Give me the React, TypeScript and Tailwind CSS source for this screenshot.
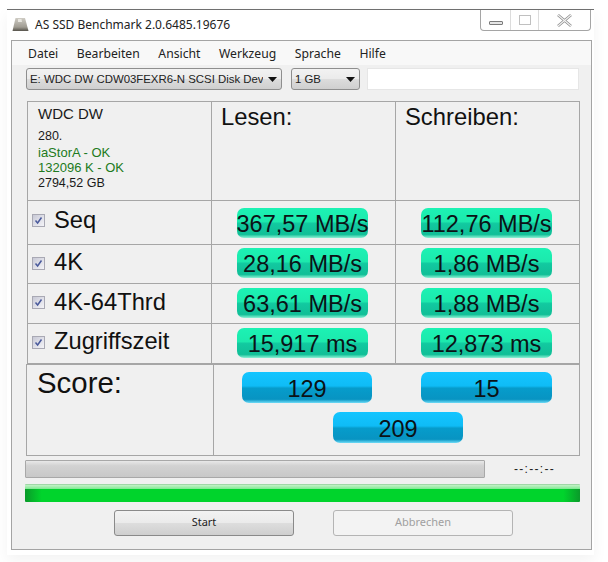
import React from "react";

function Badge({ children, blue = false, w = "w-[131px]" }: { children: React.ReactNode; blue?: boolean; w?: string }) {
  const skin = blue
    ? "h-[31px] pt-[5px] bg-[linear-gradient(#14c5ff_0%,#0fbcf6_45%,#069ccb_52%,#0894c2_88%,#6fdcf8_100%)]"
    : "h-[30px] pt-[4px] bg-[linear-gradient(#1cf2b4_0%,#1ce9ad_45%,#12c9a0_52%,#10bf97_88%,#8ff2d6_100%)]";
  return (
    <div className={`${w} ${skin} rounded-[7px] flex items-center justify-center whitespace-nowrap text-[23.5px] leading-none text-[#0b1216] font-['Liberation_Sans',sans-serif]`}>
      {children}
    </div>
  );
}

function Check() {
  return (
    <div className="w-[13px] h-[13px] shrink-0 border border-[#a9a9b4] bg-[linear-gradient(135deg,#c8c9d6,#f4f4f8)] flex items-center justify-center">
      <svg width="9" height="9" viewBox="0 0 9 9">
        <path d="M1.5 4.5 L3.6 7 L7.5 1.5" fill="none" stroke="#4a5a9c" strokeWidth="1.5" />
      </svg>
    </div>
  );
}

function Row({ label, a, b, h, labelPb, badgePb }: { label: string; a: string; b: string; h: string; labelPb: string; badgePb: string }) {
  return (
    <div className={`grid grid-cols-[184px_184px_185px] border-b border-[#a6a6a6] ${h}`}>
      <div className={`border-r border-[#a6a6a6] flex items-center gap-[9px] pl-[4px] ${labelPb} text-[23.7px] leading-none text-[#111] font-['Liberation_Sans',sans-serif]`}>
        <Check />
        <span>{label}</span>
      </div>
      <div className={`border-r border-[#a6a6a6] flex items-center pl-[25px] ${badgePb}`}>
        <Badge>{a}</Badge>
      </div>
      <div className={`flex items-center pl-[25px] ${badgePb}`}>
        <Badge>{b}</Badge>
      </div>
    </div>
  );
}

function Combo({ w, textW, text }: { w: string; textW: string; text: string }) {
  return (
    <div className={`${w} h-[22px] rounded-[3px] border border-[#8e8e8e] bg-[linear-gradient(#f2f2f2_0%,#ebebeb_48%,#dcdcdc_52%,#cfcfcf_100%)] flex items-center justify-between pl-[3px] pr-[4px]`}>
      <div className={`${textW} h-[16px] overflow-hidden`}>
        <div className="w-max text-[11.4px] leading-[16px] text-[#222] font-['Liberation_Sans',sans-serif]">{text}</div>
      </div>
      <svg width="9" height="5" viewBox="0 0 9 5" className="shrink-0">
        <path d="M0 0H9L4.5 5Z" fill="#111" />
      </svg>
    </div>
  );
}

function Btn({ children, disabled = false }: { children: React.ReactNode; disabled?: boolean }) {
  return (
    <div
      className={`w-[180px] h-[26px] pb-[1px] rounded-[3px] border flex items-center justify-center text-[11px] font-['Noto_Sans',sans-serif] ${
        disabled
          ? "border-[#b4b4b4] bg-[#f3f3f3] text-[#a0a0a0]"
          : "border-[#8a8a8a] bg-[linear-gradient(#f2f2f2_0%,#ebebeb_48%,#dddddd_52%,#cfcfcf_100%)] text-[#222]"
      }`}
    >
      {children}
    </div>
  );
}

export default function App() {
  return (
    <div className="w-[608px] h-[562px] bg-white pt-[9px] pl-[7px] overflow-hidden">
      <div className="w-[587px] h-[546px] border-t border-[#6f6f6f] shadow-[0_6px_14px_rgba(0,0,0,0.05)] flex flex-col">
        {/* title bar */}
        <div className="h-[30px] pl-[5px] pr-[3px] flex items-start justify-between bg-white">
          <div className="flex items-center gap-[6px] h-[29px]">
            <svg width="17" height="15" viewBox="0 0 17 15">
              <defs>
                <linearGradient id="drive" x1="0" y1="0" x2="0" y2="1">
                  <stop offset="0" stopColor="#cfccc4" />
                  <stop offset="0.7" stopColor="#a09c92" />
                  <stop offset="1" stopColor="#55524a" />
                </linearGradient>
              </defs>
              <path d="M3.5 1 H13 L16.5 14 H0.5 Z" fill="url(#drive)" />
              <path d="M6 2 H9.5 L10 5 H6 Z" fill="#e8e6e0" />
            </svg>
            <span className="text-[12px] text-[#222] font-['Noto_Sans',sans-serif]">AS SSD Benchmark 2.0.6485.19676</span>
          </div>
          <div className="w-[111px] h-[21px] border border-t-0 border-[#a5a5a5] rounded-b-[4px] flex">
            <div className="w-[30px] border-r border-[#dcdcdc] flex items-center justify-center">
              <div className="w-[14px] h-[4px] mt-[5px] border border-[#7a7a7a] rounded-[1px] bg-[#e5e5e5]" />
            </div>
            <div className="w-[28px] border-r border-[#dcdcdc] flex items-center justify-center">
              <div className="w-[12px] h-[10px] border border-[#c0c0c0]" />
            </div>
            <div className="flex-1 flex items-center justify-center">
              <svg width="15" height="13" viewBox="0 0 15 13">
                <path d="M1 1 L14 12 M14 1 L1 12" stroke="#8a8a8a" strokeWidth="2.6" />
                <path d="M1 1 L14 12 M14 1 L1 12" stroke="#f4f4f4" strokeWidth="1.1" />
              </svg>
            </div>
          </div>
        </div>

        {/* client */}
        <div className="ml-[4px] w-[581px] h-[510px] border border-[#a4a4a4] bg-[#f0f0f0] flex flex-col">
          <div className="h-[24px] pt-[2px] bg-[#f8f8f8] flex items-center gap-[18.6px] pl-[16px] text-[12.2px] text-[#222] font-['Noto_Sans',sans-serif]">
            <span>Datei</span>
            <span>Bearbeiten</span>
            <span>Ansicht</span>
            <span>Werkzeug</span>
            <span>Sprache</span>
            <span>Hilfe</span>
          </div>

          <div className="h-[36px] pl-[14px] pt-[3px] flex items-start">
            <Combo w="w-[256px]" textW="w-[233px]" text="E: WDC DW CDW03FEXR6-N SCSI Disk Dev" />
            <div className="ml-[9px]">
              <Combo w="w-[69px]" textW="w-[40px]" text="1 GB" />
            </div>
            <div className="ml-[7px] w-[212px] h-[22px] bg-white border border-[#e6e6e6]" />
          </div>

          <div className="ml-[15px] w-[553px] border border-b-0 border-[#a6a6a6]">
            <div className="grid grid-cols-[184px_184px_185px] h-[99px] border-b border-[#a6a6a6]">
              <div className="border-r border-[#a6a6a6] pl-[10px] pt-[3px] font-['Liberation_Sans',sans-serif]">
                <div className="text-[15px] leading-[18px] text-[#1a1a1a]">WDC DW</div>
                <div className="mt-[6px] text-[12.5px] leading-[15.5px] text-[#1a1a1a]">
                  <div>280.</div>
                  <div className="text-[13px] text-[#207a20]">iaStorA - OK</div>
                  <div className="text-[13px] text-[#207a20]">132096 K - OK</div>
                  <div>2794,52 GB</div>
                </div>
              </div>
              <div className="border-r border-[#a6a6a6] pl-[9px] pt-[1px] text-[23.8px] leading-[28px] text-[#111] font-['Liberation_Sans',sans-serif]">Lesen:</div>
              <div className="pl-[9px] pt-[1px] text-[23.8px] leading-[28px] text-[#111] font-['Liberation_Sans',sans-serif]">Schreiben:</div>
            </div>
            <Row h="h-[44px]" labelPb="pb-[4px]" badgePb="pb-0" label="Seq" a="367,57 MB/s" b="112,76 MB/s" />
            <Row h="h-[39px]" labelPb="pb-[2px]" badgePb="pb-[2px]" label="4K" a="28,16 MB/s" b="1,86 MB/s" />
            <Row h="h-[40px]" labelPb="pb-[2px]" badgePb="pb-[2px]" label="4K-64Thrd" a="63,61 MB/s" b="1,88 MB/s" />
            <Row h="h-[40px]" labelPb="pb-[3px]" badgePb="pb-[2px]" label="Zugriffszeit" a="15,917 ms" b="12,873 ms" />
          </div>

          <div className="ml-[14px] w-[554px] h-[92px] border border-[#a6a6a6] grid grid-cols-[187px_1fr]">
            <div className="border-r border-[#a6a6a6] pl-[10px] pt-[1px] text-[29.4px] leading-[34px] text-[#111] font-['Liberation_Sans',sans-serif]">Score:</div>
            <div className="pt-[7px]">
              <div className="flex pl-[28px] gap-[49px]">
                <Badge blue w="w-[130px]">129</Badge>
                <Badge blue>15</Badge>
              </div>
              <div className="pl-[119px] mt-[9px]">
                <Badge blue w="w-[130px]">209</Badge>
              </div>
            </div>
          </div>

          <div className="ml-[13px] mt-[4px] flex items-center">
            <div className="w-[460px] h-[18px] rounded-[1px] border border-[#a8a8a8] bg-[linear-gradient(#e8e8e8_0%,#d2d2d2_30%,#c8c8c8_100%)]" />
            <div className="ml-[29px] text-[12px] tracking-[1.3px] text-[#222] font-['Liberation_Sans',sans-serif]">--:--:--</div>
          </div>

          <div className="ml-[13px] mt-[6px] w-[555px] h-[18px] rounded-[1px] border-t border-[#9fd8a6] bg-[linear-gradient(90deg,#0a9a2a_0%,#00d42c_3%,#00d42c_97%,#0a9a2a_100%)] overflow-hidden">
            <div className="h-[4px] bg-[linear-gradient(#c4f2c8,#7fe892)]" />
          </div>

          <div className="mt-[8px] pl-[102px] flex gap-[39px]">
            <Btn>Start</Btn>
            <Btn disabled>Abbrechen</Btn>
          </div>
        </div>
      </div>
    </div>
  );
}
